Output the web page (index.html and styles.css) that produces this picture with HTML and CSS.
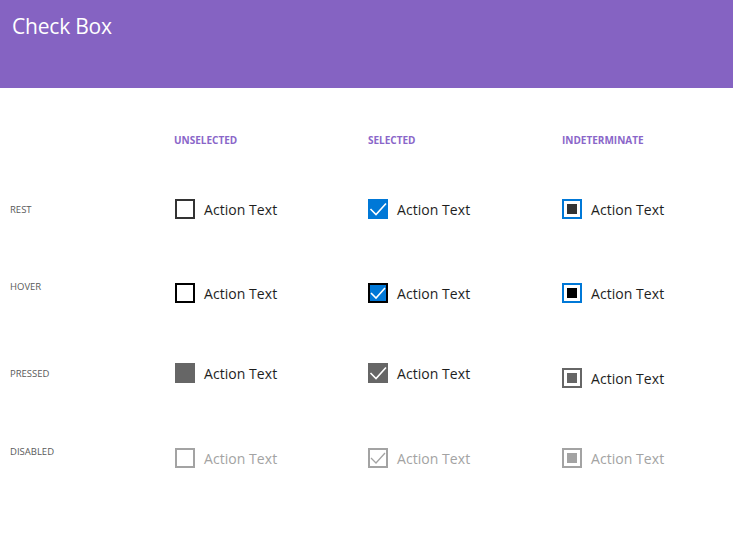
FILE: index.html
```html
<!DOCTYPE html>
<html>
<head>
<meta charset="utf-8">
<link rel="stylesheet" href="styles.css">
</head>
<body>
<header class="topbar"><h1 class="title">Check Box</h1></header>
<main class="table">
  <div class="row row-head">
    <div class="label"></div>
    <div class="cell colhead">UNSELECTED</div>
    <div class="cell colhead">SELECTED</div>
    <div class="cell colhead">INDETERMINATE</div>
  </div>
  <div class="row row-rest">
    <div class="label">REST</div>
    <div class="cell"><span class="box un-rest"></span><span class="txt">Action Text</span></div>
    <div class="cell"><span class="box sel-rest"><svg viewBox="0 0 20 20"><polyline points="2.5,10 8,15.5 18,4.5"/></svg></span><span class="txt">Action Text</span></div>
    <div class="cell"><span class="box ind-rest"><span class="dot"></span></span><span class="txt">Action Text</span></div>
  </div>
  <div class="row row-hover">
    <div class="label lift">HOVER</div>
    <div class="cell"><span class="box un-hover"></span><span class="txt">Action Text</span></div>
    <div class="cell"><span class="box sel-hover"><svg viewBox="0 0 16 16"><polyline points="1,8 6,13 15,3"/></svg></span><span class="txt">Action Text</span></div>
    <div class="cell"><span class="box ind-hover"><span class="dot"></span></span><span class="txt">Action Text</span></div>
  </div>
  <div class="row row-pressed">
    <div class="label">PRESSED</div>
    <div class="cell"><span class="box un-pressed"></span><span class="txt">Action Text</span></div>
    <div class="cell"><span class="box sel-pressed"><svg viewBox="0 0 20 20"><polyline points="2.5,10 8,15.5 18,4.5"/></svg></span><span class="txt">Action Text</span></div>
    <div class="cell drop"><span class="box ind-pressed"><span class="dot"></span></span><span class="txt">Action Text</span></div>
  </div>
  <div class="row row-disabled">
    <div class="label lift">DISABLED</div>
    <div class="cell dis"><span class="box un-dis"></span><span class="txt">Action Text</span></div>
    <div class="cell dis"><span class="box sel-dis"><svg viewBox="0 0 16 16"><polyline points="1,8 6,13 15,3"/></svg></span><span class="txt">Action Text</span></div>
    <div class="cell dis"><span class="box ind-dis"><span class="dot"></span></span><span class="txt">Action Text</span></div>
  </div>
</main>
</body>
</html>
```

FILE: styles.css
```css
* { box-sizing: border-box; }
html, body { margin: 0; padding: 0; background: #fff; }
body { font-family: "Open Sans", "Noto Sans", sans-serif; width: 733px; height: 535px; overflow: hidden; }

.topbar { height: 88px; background: #8563c2; padding: 12px 12px 0; }
.title { margin: 0; font-weight: 400; font-size: 21px; line-height: 28px; color: #fff; letter-spacing: -0.2px; }

.table { padding-top: 32px; }
.row { display: flex; align-items: center; }
.row-head { height: 40px; }
.row-rest { height: 98px; }
.row-hover { height: 70px; }
.row-pressed { height: 90px; }
.row-disabled { height: 80px; }

.label { flex: none; width: 174px; padding-left: 10px; font-size: 9.5px; color: #5a5a5a; font-weight: 400; letter-spacing: 0; }
.lift { margin-bottom: 14px; }
.cell { flex: none; width: 194px; display: flex; align-items: center; }
.colhead { font-size: 10px; font-weight: 700; color: #8a66c9; }
.drop { margin-top: 10px; }

.box { width: 20px; height: 20px; flex: none; display: flex; align-items: center; justify-content: center; margin-left: 1px; }
.row .cell:nth-child(3) .box, .row .cell:nth-child(4) .box { margin-left: 0; }
.txt { margin-left: 9px; font-size: 14px; color: #1e1e1e; letter-spacing: 0.05px; }
.dis .txt { color: #a3a3a3; }

.box svg { width: 100%; height: 100%; display: block; fill: none; stroke-width: 1.6; }

.un-rest { border: 2px solid #333; }
.un-hover { border: 2px solid #000; }
.un-pressed { background: #666; }
.un-dis { border: 2px solid #a3a3a3; }

.sel-rest { background: #0078d7; }
.sel-rest svg { stroke: #fff; }
.sel-hover { background: #0078d7; border: 2px solid #000; }
.sel-hover svg { stroke: #fff; }
.sel-pressed { background: #666; }
.sel-pressed svg { stroke: #fff; }
.sel-dis { border: 2px solid #a3a3a3; }
.sel-dis svg { stroke: #a3a3a3; stroke-width: 1.3; }

.dot { width: 10px; height: 10px; display: block; }
.ind-rest { border: 2px solid #0078d7; }
.ind-rest .dot { background: #333; }
.ind-hover { border: 2px solid #0078d7; }
.ind-hover .dot { background: #000; }
.ind-pressed { border: 2px solid #666; }
.ind-pressed .dot { background: #666; }
.ind-dis { border: 2px solid #a3a3a3; }
.ind-dis .dot { background: #a3a3a3; }
```
